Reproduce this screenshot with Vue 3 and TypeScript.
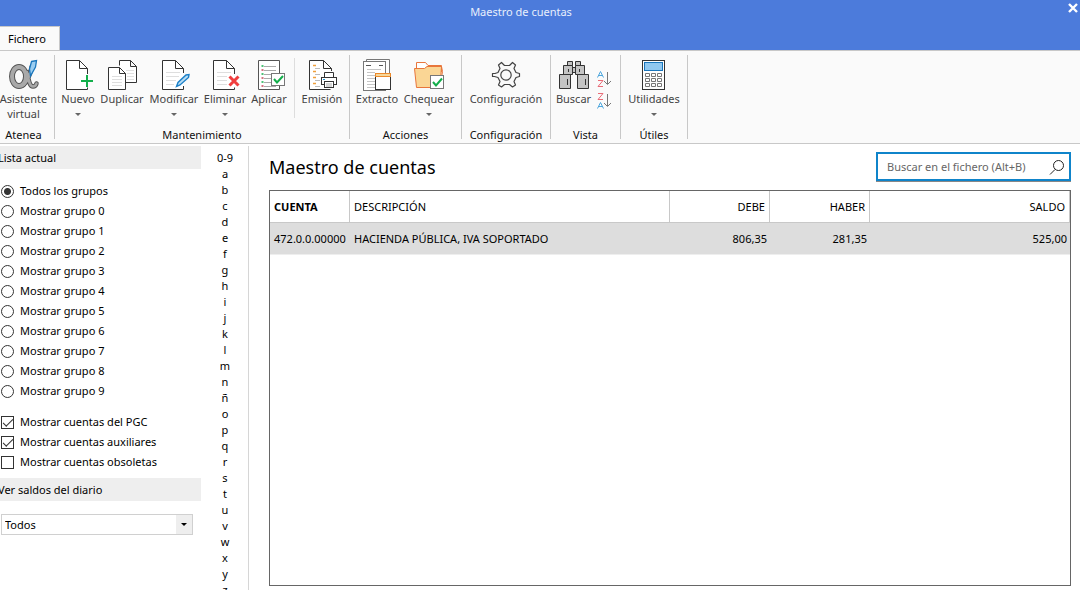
<script setup lang="ts">
import { ref } from 'vue'

interface Account {
  code: string
  name: string
  debit: string
  credit: string
  balance: string
}

const groups: string[] = ['Todos los grupos', ...Array.from({ length: 10 }, (_, i) => `Mostrar grupo ${i}`)]
const selectedGroup = ref(groups[0])

const filters = ref([
  { id: 'pgc', label: 'Mostrar cuentas del PGC', checked: true },
  { id: 'aux', label: 'Mostrar cuentas auxiliares', checked: true },
  { id: 'obs', label: 'Mostrar cuentas obsoletas', checked: false },
])

const letters: string[] = ['0-9', ...'abcdefghijklmnñopqrstuvwxyz']
const journal = ref('Todos')
const search = ref('')

const accounts: Account[] = [
  { code: '472.0.0.00000', name: 'HACIENDA PÚBLICA, IVA SOPORTADO', debit: '806,35', credit: '281,35', balance: '525,00' },
]
</script>

<template>
  <div class="window">
    <header class="titlebar">
      <div class="title">Maestro de cuentas</div>
      <button class="close" type="button" aria-label="Cerrar">
        <svg width="10" height="10" viewBox="0 0 10 10"><path d="M1 1l8 8M9 1l-8 8" stroke="#fff" stroke-width="2.4" /></svg>
      </button>
      <button class="tab" type="button">Fichero</button>
    </header>

    <nav class="ribbon">
      <section class="group atenea">
        <div class="tools">
          <button class="tool" type="button">
            <svg class="icon" viewBox="0 0 32 34" fill="none">
              <g stroke-linecap="round">
                <ellipse cx="11" cy="18.5" rx="7" ry="9.5" stroke="#555" stroke-width="6" />
                <path d="M23.5 9C22.5 15 20 23 15.5 27M19 14c1.5 6 2 14.5 6 14.5 2 0 3-1 3.5-3" stroke="#555" stroke-width="4.5" />
                <ellipse cx="11" cy="18.5" rx="7" ry="9.5" stroke="#a9a9a9" stroke-width="4" />
                <path d="M23.5 9C22.5 15 20 23 15.5 27M19 14c1.5 6 2 14.5 6 14.5 2 0 3-1 3.5-3" stroke="#a9a9a9" stroke-width="2.5" />
              </g>
              <path d="M23.500 3.500l5-1-1 6.500-5 9-1-7z" fill="#9bcdf0" stroke="#1976bd" stroke-width="1.300" />
            </svg>
            <span>Asistente<br />virtual</span>
          </button>
        </div>
        <h2>Atenea</h2>
      </section>

      <section class="group mantenimiento">
        <div class="tools">
          <button class="tool nuevo" type="button">
            <svg class="icon" viewBox="0 0 32 34" fill="none">
              <path d="M25.500 16V10.500L17.500 2.500H4.500v29h21v-2M17.500 2.500v8h8" fill="#fff" stroke="#333" />
              <path d="M19 23h12M25 17v12" stroke="#13ae4b" stroke-width="2" />
            </svg>
            <span>Nuevo</span><i class="caret"></i>
          </button>
          <button class="tool duplicar" type="button">
            <svg class="icon" viewBox="0 0 32 34" fill="none">
              <path d="M13.500 7.500v-5h11l6 6v16H20M24.500 2.500v6h6" fill="#fff" stroke="#333" />
              <path d="M20 12.500h8M21 15.500h7M21 18.500h7M21 21.500h7" stroke="#e0e0e0" />
              <path d="M13.500 9.500h-11v22h17v-16zM13.500 9.500v6h6" fill="#fff" stroke="#333" />
              <path d="M6 18.500h10M6 21.500h10M6 24.500h10M6 27.500h10" stroke="#dedede" />
            </svg>
            <span>Duplicar</span>
          </button>
          <button class="tool modificar" type="button">
            <svg class="icon" viewBox="0 0 32 34" fill="none">
              <path d="M25.500 15V10.500L17.500 2.500H4.500v29h21V28M17.500 2.500v8h8" fill="#fff" stroke="#333" />
              <path d="M8 14.500h14M8 18.500h13M8 22.500h10M8 26.500h8" stroke="#dedede" />
              <path d="M18.500 28.500l1.500-4 8-7.500 3-.5-.5 3-8.500 7.500z" fill="#b8ddf5" stroke="#1c80c8" stroke-width="1.400" />
            </svg>
            <span>Modificar</span><i class="caret"></i>
          </button>
          <button class="tool eliminar" type="button">
            <svg class="icon" viewBox="0 0 32 34" fill="none">
              <path d="M25.500 16V10.500L17.500 2.500H4.500v29h21v-2M17.500 2.500v8h8" fill="#fff" stroke="#333" />
              <path d="M8 14.500h14M8 18.500h10M8 22.500h10M8 26.500h10" stroke="#dedede" />
              <path d="M20.500 18.500l9 9M29.500 18.500l-9 9" stroke="#f03e3e" stroke-width="3" />
            </svg>
            <span>Eliminar</span><i class="caret"></i>
          </button>
          <button class="tool aplicar" type="button">
            <svg class="icon" viewBox="0 0 32 34" fill="none">
              <path d="M26.500 15V2.500h-21v29h21v-4" fill="#fff" stroke="#555" />
              <path d="M11 8.500h12M11 12.500h12M11 16.500h7M11 20.500h7M11 24.500h7M11 28.500h12" stroke="#aaa" />
              <path d="M8.500 8h2M8.500 16h2M8.500 24h2" stroke="#13ae4b" stroke-width="1.500" />
              <path d="M8.500 12h2M8.500 20h2M8.500 28h2" stroke="#c8465a" stroke-width="1.500" />
              <rect x="18.500" y="15.500" width="13" height="12" fill="#fff" stroke="#777" />
              <path d="M21 21l3 3.500 6-6.500" stroke="#13ae4b" stroke-width="2" />
            </svg>
            <span>Aplicar</span>
          </button>
          <button class="tool emision" type="button">
            <svg class="icon" viewBox="0 0 32 34" fill="none">
              <path d="M25.500 13v-2.500L17.500 2.500H3.500v29h21M17.500 2.500v8h8" fill="#fff" stroke="#333" />
              <path d="M7 7.500h3M7 13.500h3M7 19.500h3M7 25.500h3" stroke="#f0a03c" stroke-width="1.600" />
              <path d="M9 10.500h5M9 16.500h5M9 22.500h5M9 28.500h5" stroke="#bbb" />
              <path d="M18.500 20v-5.500h9V20" fill="#fff" stroke="#333" />
              <rect x="15.500" y="19.500" width="15" height="7" fill="#fff" stroke="#333" />
              <rect x="18.500" y="23.500" width="9" height="6" fill="#fff" stroke="#333" />
              <path d="M20 26h6M20 28h6" stroke="#aaa" />
              <path d="M17 21.500h2" stroke="#1690d0" />
            </svg>
            <span>Emisión</span>
          </button>
        </div>
        <h2>Mantenimiento</h2>
      </section>

      <section class="group acciones">
        <div class="tools">
          <button class="tool extracto" type="button">
            <svg class="icon" viewBox="0 0 32 34" fill="none">
              <path d="M5.500 3.500v-2h23v29h-3" fill="#fff" stroke="#777" />
              <rect x="2.500" y="3.500" width="22" height="29" fill="#fff" stroke="#777" />
              <path d="M5 7.500h5M18 7.500h4" stroke="#555" />
              <path d="M6 11.500h14M6 14.500h8M6 17.500h8M6 20.500h8M6 23.500h8M6 26.500h8M6 29.500h8" stroke="#c5c5c5" />
              <rect x="14.500" y="15.500" width="15" height="16" fill="#fff" stroke="#333" />
              <rect x="14.500" y="15.500" width="15" height="3" fill="#f7d79a" stroke="#ec8a2c" />
            </svg>
            <span>Extracto</span>
          </button>
          <button class="tool chequear" type="button">
            <svg class="icon" viewBox="0 0 32 34" fill="none">
              <path d="M3.500 13V4.500h9l2.500 3h13.500V14" fill="#fff" stroke="#e8763c" />
              <path d="M1.500 10.500h10l2.500-2h14.500l-1.500 21H3.500z" fill="#fad695" stroke="#e8763c" />
              <path d="M28.500 8.500l1 5-1 6" stroke="#e8763c" />
              <rect x="17.500" y="17.500" width="13" height="13" fill="#fff" stroke="#777" />
              <path d="M20 24l3 3.500 6-7" stroke="#13ae4b" stroke-width="2" />
            </svg>
            <span>Chequear</span><i class="caret"></i>
          </button>
        </div>
        <h2>Acciones</h2>
      </section>

      <section class="group configuracion">
        <div class="tools">
          <button class="tool" type="button">
            <svg class="icon" viewBox="0 0 32 34" fill="none" stroke="#444" stroke-width="1.200" stroke-linejoin="round">
              <path d="M26 14.500l3.500 1v3L26 19.500l-2 4 1.500 3.500-3 2-3-2.500h-5l-3 2.500-3-2L10 23.500l-2-4-3.500-1H2.500v-3H5l3-1 2-4L8.500 7l3-2.500 3 3h5l3-3 3 2.500-1.500 3.500z" />
              <circle cx="16" cy="17" r="5.200" />
            </svg>
            <span>Configuración</span>
          </button>
        </div>
        <h2>Configuración</h2>
      </section>

      <section class="group vista">
        <div class="tools">
          <button class="tool buscar" type="button">
            <svg class="icon" viewBox="0 0 32 34" fill="#c4c4c4" stroke="#333">
              <path d="M9.500 3.500h5v4h-5zM17.500 3.500h5v4h-5zM14.500 9.500h3v5h-3z" />
              <path d="M5.500 7.500h9v9h-9zM17.500 7.500h9v9h-9z" />
              <path d="M1.500 16.500h11v14h-11zM19.500 16.500h11v14h-11z" />
              <path d="M10.500 11v3M21.500 11v3M9.500 21v6M27.500 21v6" fill="none" />
            </svg>
            <span>Buscar</span>
          </button>
          <div class="sorts">
            <button type="button" aria-label="Orden ascendente">
              <svg width="16" height="18" viewBox="0 0 16 18" fill="none">
                <path d="M1.500 7.500l3-6 3 6M2.500 5.500h4" stroke="#4ca6dd" />
                <path d="M2 10.500h5l-5 6h5" stroke="#e96b77" />
                <path d="M11.500 2v12M8 11l3.500 3.500L15 11" stroke="#777" />
              </svg>
            </button>
            <button type="button" aria-label="Orden descendente">
              <svg width="16" height="18" viewBox="0 0 16 18" fill="none">
                <path d="M2 1.500h5l-5 6h5" stroke="#e96b77" />
                <path d="M1.500 16.500l3-6 3 6M2.500 14.500h4" stroke="#4ca6dd" />
                <path d="M11.500 2v12M8 11l3.500 3.500L15 11" stroke="#777" />
              </svg>
            </button>
          </div>
        </div>
        <h2>Vista</h2>
      </section>

      <section class="group utiles">
        <div class="tools">
          <button class="tool" type="button">
            <svg class="icon" viewBox="0 0 32 34" fill="#fff" stroke="#333">
              <rect x="4.500" y="2.500" width="22" height="29" />
              <rect x="6.500" y="4.500" width="18" height="8" fill="#90c8f0" stroke="#1976bd" />
              <path d="M7.500 15.500h4v3h-4zM13.500 15.500h4v3h-4zM19.500 15.500h4v3h-4zM7.500 20.500h4v3h-4zM13.500 20.500h4v3h-4zM19.500 20.500h4v3h-4zM7.500 25.500h4v3h-4zM13.500 25.500h4v3h-4zM19.500 25.500h4v3h-4z" stroke="#777" />
            </svg>
            <span>Utilidades</span><i class="caret"></i>
          </button>
        </div>
        <h2>Útiles</h2>
      </section>
    </nav>

    <div class="body">
      <aside class="sidebar">
        <h3>Lista actual</h3>
        <div class="options">
          <label v-for="g in groups" :key="g"><input v-model="selectedGroup" type="radio" name="grupo" :value="g" />{{ g }}</label>
        </div>
        <div class="options checks">
          <label v-for="f in filters" :key="f.id"><input v-model="f.checked" type="checkbox" />{{ f.label }}</label>
        </div>
        <h3 id="saldos">Ver saldos del diario</h3>
        <div class="combo">
          <select v-model="journal" aria-labelledby="saldos"><option>Todos</option></select>
          <span class="drop"><i></i></span>
        </div>
      </aside>

      <div class="letters">
        <button v-for="l in letters" :key="l" type="button">{{ l }}</button>
      </div>

      <main>
        <div class="heading">
          <h1>Maestro de cuentas</h1>
          <div class="search">
            <input v-model="search" type="text" placeholder="Buscar en el fichero (Alt+B)" aria-label="Buscar en el fichero" />
            <button type="button" aria-label="Buscar">
              <svg width="16" height="16" viewBox="0 0 16 16" fill="none" stroke="#222"><circle cx="9.500" cy="6.500" r="5" /><path d="M6 10.500L1 15.500" /></svg>
            </button>
          </div>
        </div>
        <div class="grid">
          <table>
            <colgroup><col class="c-code" /><col class="c-name" /><col class="c-num" /><col class="c-num" /><col /></colgroup>
            <thead>
              <tr><th class="sorted">CUENTA</th><th>DESCRIPCIÓN</th><th class="num">DEBE</th><th class="num">HABER</th><th class="num">SALDO</th></tr>
            </thead>
            <tbody>
              <tr v-for="a in accounts" :key="a.code">
                <td>{{ a.code }}</td><td>{{ a.name }}</td><td class="num">{{ a.debit }}</td><td class="num">{{ a.credit }}</td><td class="num">{{ a.balance }}</td>
              </tr>
            </tbody>
          </table>
        </div>
      </main>
    </div>
  </div>
</template>

<style>
body { margin: 0; background: #fff; }
</style>

<style scoped>
* { box-sizing: border-box; }
.window {
  height: 100vh;
  display: flex;
  flex-direction: column;
  overflow: hidden;
  font: 11px/14px "Noto Sans", "Open Sans", sans-serif;
  color: #000;
}
button, input, select { font: inherit; color: inherit; }
button { padding: 0; border: 0; background: none; }
h1, h2, h3 { margin: 0; font-weight: 400; }

.titlebar {
  flex: none;
  display: grid;
  grid-template-columns: 1fr;
  grid-template-rows: 26px 24px;
  background: #4c7bdb;
}
.title {
  grid-area: 1 / 1;
  padding: 5px 38px 0 0;
  color: #e8effc;
  text-align: center;
}
.close { grid-area: 1 / 1; place-self: start end; padding: 3px 2px; display: flex; }
.tab {
  justify-self: start;
  padding: 0 13px 0 8px;
  background: #fafafa;
  border-top: 1px solid #c8c8c8;
  border-right: 1px solid #c8c8c8;
}

.ribbon {
  flex: none;
  display: flex;
  height: 94px;
  padding: 4px 0;
  background: #fafafa;
  border-top: 1px solid #c8c8c8;
  border-bottom: 1px solid #c8c8c8;
}
.group {
  display: flex;
  flex-direction: column;
  justify-content: space-between;
  padding-top: 3px;
  border-right: 1px solid #c8c8c8;
}
.group h2 { font-size: 11px; line-height: 14px; height: 11px; text-align: center; color: #111; }
.tools { display: flex; align-items: flex-start; justify-content: center; }
.tool {
  display: flex;
  flex-direction: column;
  align-items: center;
  color: #444;
  white-space: nowrap;
}
.icon { width: 32px; height: 34px; flex: none; }
.tool span { margin-top: -1px; line-height: 15px; }
.caret { margin-top: 7px; border: 3px solid transparent; border-top-color: #666; border-bottom: 0; }
.atenea { width: 55px; padding-right: 7px; }
.mantenimiento { width: 295px; }
.mantenimiento .tools { justify-content: flex-start; padding-left: 3px; }
.nuevo { width: 40px; }
.duplicar { width: 48px; }
.modificar { width: 56px; }
.eliminar { width: 46px; }
.aplicar { width: 42px; }
.emision { width: 55px; height: 60px; margin-left: 4px; border-left: 1px solid #ddd; }
.acciones { width: 112px; }
.acciones .tools { justify-content: flex-start; padding-left: 2px; }
.extracto { width: 50px; }
.chequear { width: 54px; }
.configuracion { width: 89px; }
.vista { width: 70px; }
.vista .tools { padding-right: 6px; }
.buscar { width: 40px; }
.sorts { display: flex; flex-direction: column; gap: 4px; padding: 12px 0 0 2px; }
.sorts button { display: flex; }
.utiles { width: 67px; }

.body { flex: 1; min-height: 0; display: flex; padding-top: 2px; }
.sidebar { flex: none; width: 201px; }
.sidebar h3 { height: 23px; font-size: 11px; line-height: 23px; background: #eee; text-indent: -2px; }
.options { padding-top: 12px; }
.options label { display: flex; align-items: center; gap: 6px; height: 20px; padding-left: 1px; }
.checks { padding: 11px 0 6px; }
.options input {
  appearance: none;
  width: 13px;
  height: 13px;
  margin: 0;
  border: 1px solid #333;
  background: #fff;
}
.options input[type="radio"] { border-radius: 50%; }
.options input[type="radio"]:checked { background: radial-gradient(circle, #333 3px, #fff 4px); }
.options input[type="checkbox"]:checked::after {
  content: "";
  display: block;
  width: 9px;
  height: 4px;
  margin: 2px 1px;
  border-left: 1px solid #333;
  border-bottom: 1px solid #333;
  transform: rotate(-45deg);
}
.combo { display: flex; width: 192px; height: 21px; margin: 13px 0 0 1px; border: 1px solid #d0d0d0; }
.combo select { flex: 1; min-width: 0; padding: 0 0 0 3px; border: 0; appearance: none; background: #fff; }
.drop { width: 16px; display: flex; align-items: center; justify-content: center; background: #eee; pointer-events: none; }
.drop i { border: 3px solid transparent; border-top-color: #000; border-bottom: 0; }

.letters { flex: none; width: 48px; display: flex; flex-direction: column; padding: 4px 0 0 1px; border-right: 1px solid #d6d6d6; overflow: hidden; }
.letters button { flex: none; height: 16px; line-height: 16px; }

main { flex: 1; min-width: 0; display: flex; flex-direction: column; padding: 6px 9px 4px 20px; }
.heading { display: flex; justify-content: space-between; margin-bottom: 8px; }
h1 { font-size: 18px; line-height: 30px; }
.search { display: flex; align-items: center; width: 195px; height: 29px; border: 2px solid #0f84ca; background: #fff; box-shadow: 0 1px 0 #888; }
.search input { flex: 1; min-width: 0; padding: 0 0 0 9px; border: 0; outline: 0; background: none; }
.search input::placeholder { color: #666; opacity: 1; }
.search button { display: flex; padding-right: 4px; }
.grid { flex: 1; border: 1px solid #666; }
table { width: 100%; table-layout: fixed; border-collapse: separate; border-spacing: 0; font-size: 11px; line-height: 16px; }
.c-code { width: 80px; }
.c-name { width: 320px; }
.c-num { width: 100px; }
th, td { padding: 0 4px; height: 32px; text-align: left; white-space: nowrap; }
th { font-weight: 400; border-right: 1px solid #c8c8c8; border-bottom: 1px solid #c8c8c8; }
.sorted { font-weight: 700; }
td { padding-right: 3px; background: #ddd; border-bottom: 1px solid #eee; }
th.num, td.num { text-align: right; }
</style>
